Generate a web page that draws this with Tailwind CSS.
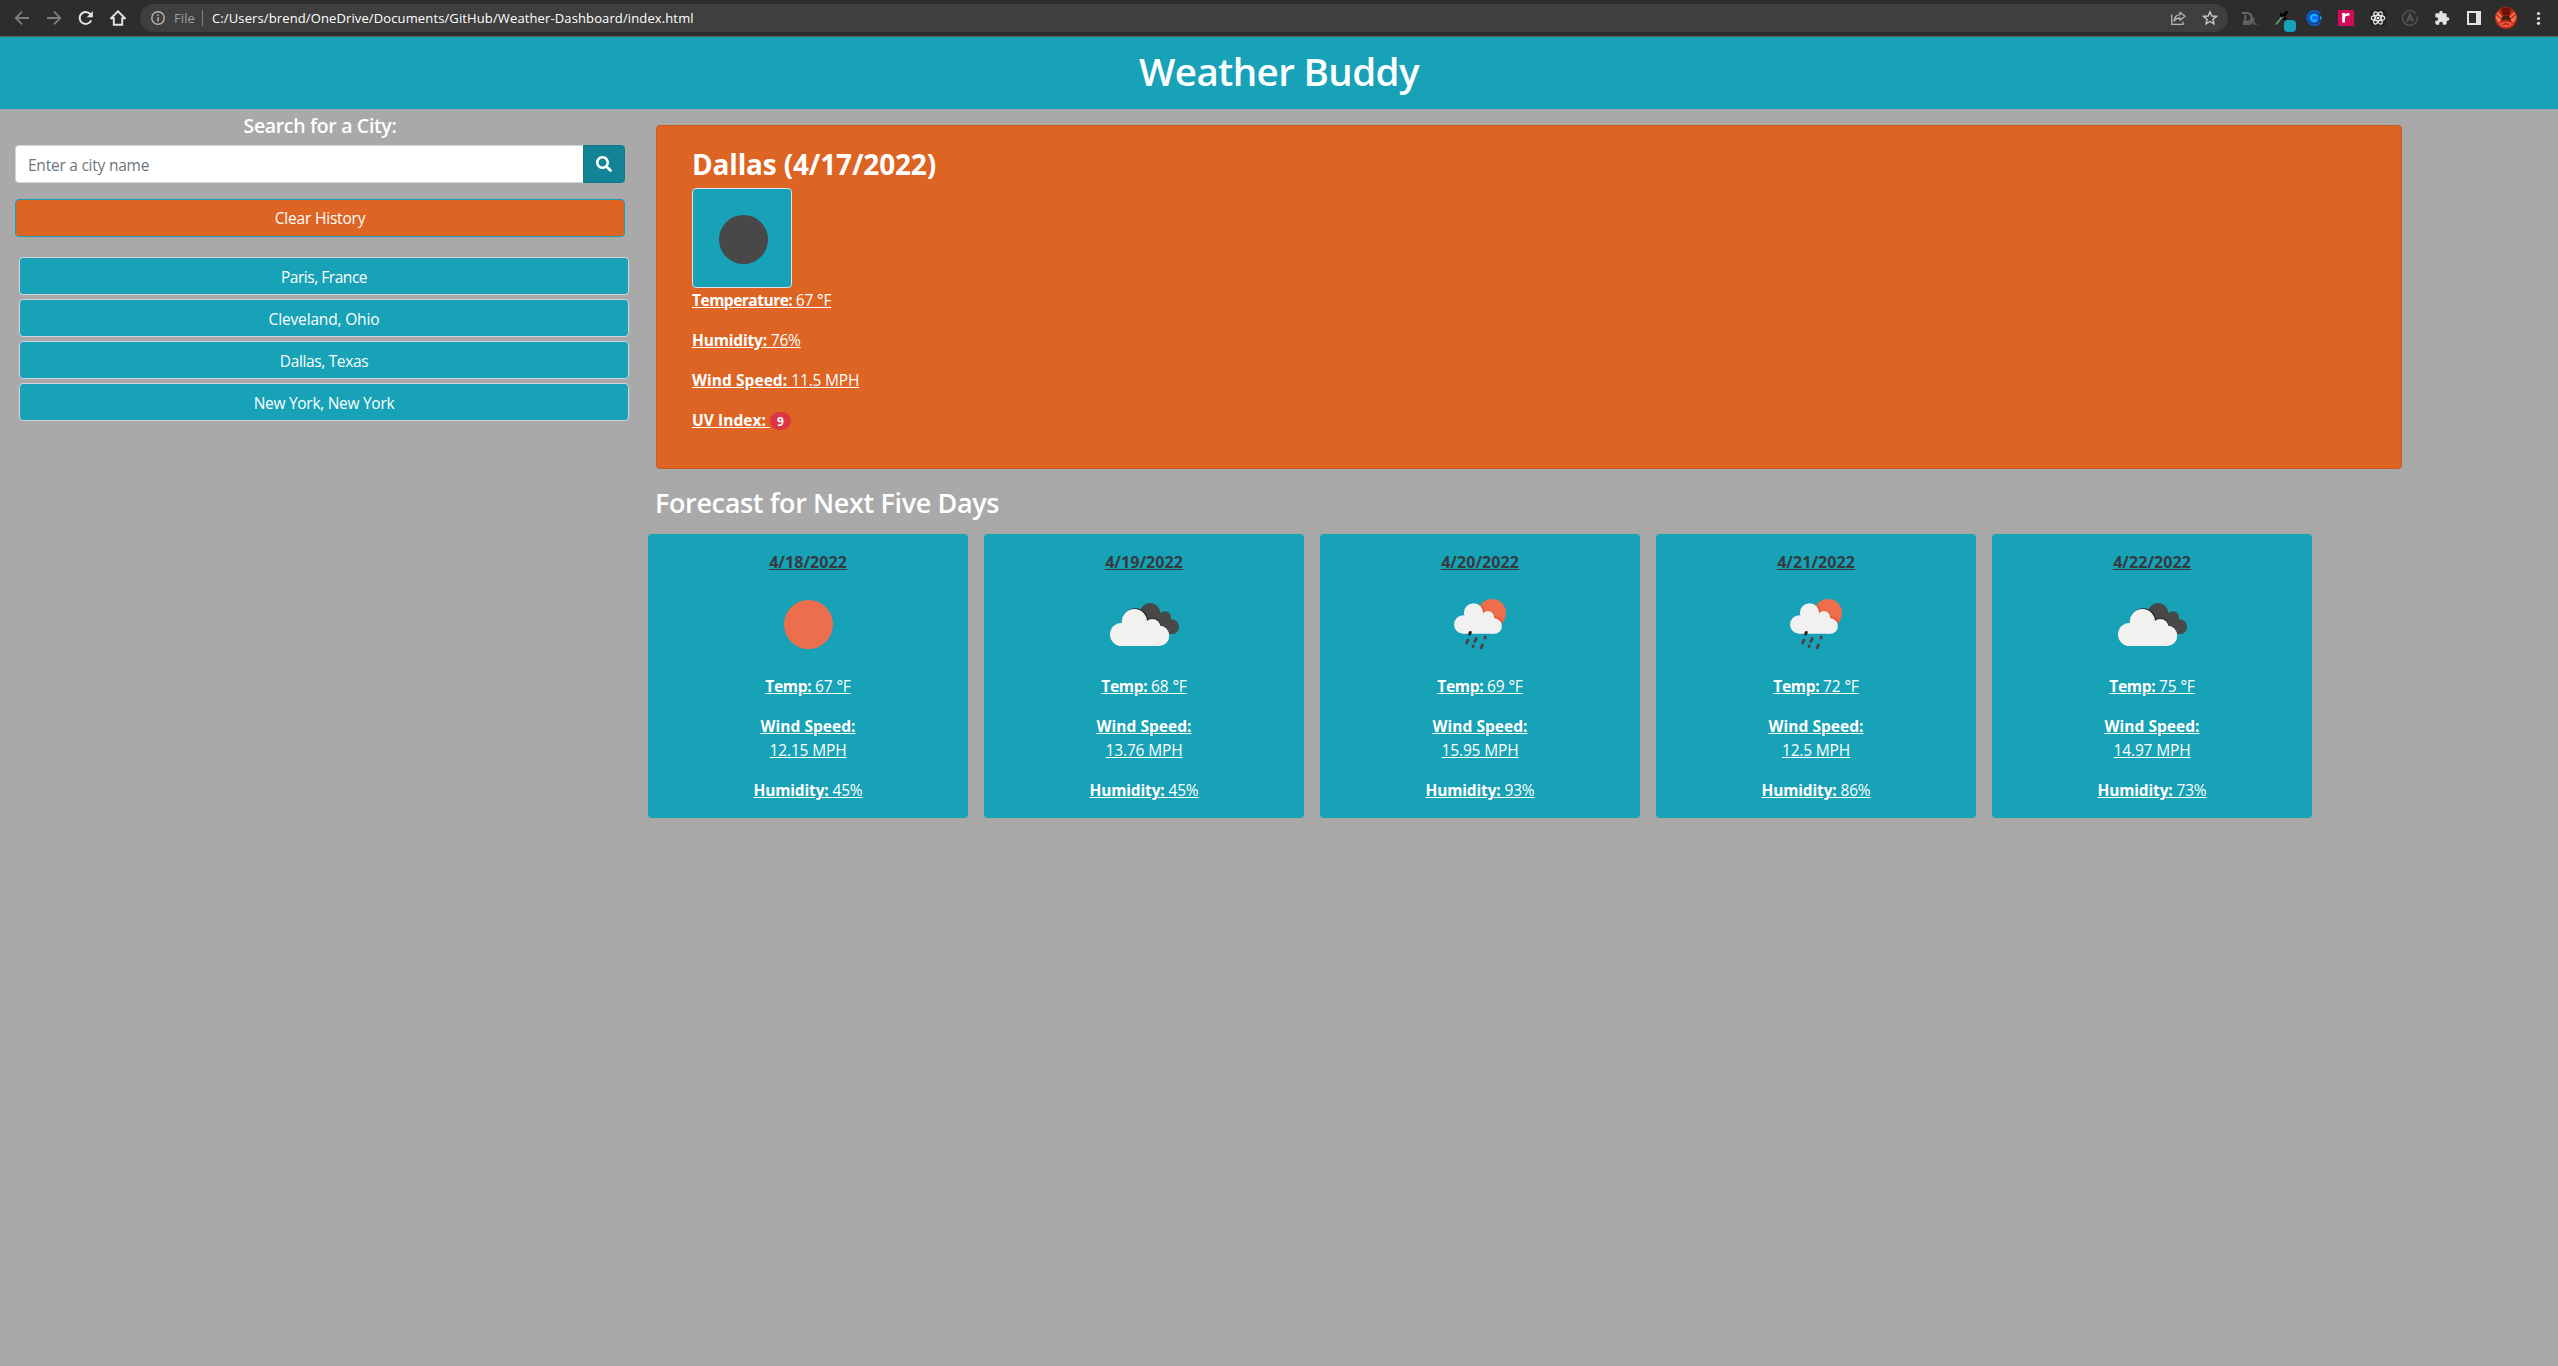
<!DOCTYPE html>
<html lang="en">
<head>
<meta charset="utf-8">
<title>Weather Buddy</title>
<script src="https://cdn.jsdelivr.net/npm/@tailwindcss/browser@4"></script>
</head>
<body class="min-h-screen overflow-hidden bg-[#a9a9a9] font-['Segoe_UI','Open_Sans','Noto_Sans',sans-serif] text-[15.5px] leading-6 text-white">

<svg class="hidden">
  <symbol id="sun" viewBox="0 0 100 100"><circle cx="50.5" cy="50.5" r="24.5" fill="#ec6e4c"/></symbol>
  <symbol id="clouds" viewBox="0 0 100 100">
    <g fill="#484849"><circle cx="56" cy="39.5" r="10.4"/><circle cx="71" cy="43.3" r="6.1"/><circle cx="77.6" cy="52.7" r="7.4"/><path d="M56 40L70 40L78 48L77 60L60 60Z"/></g>
    <g fill="#26262a"><circle cx="41.3" cy="47.2" r="12.9"/><circle cx="58.8" cy="52.2" r="8.2"/><path d="M60 52L66 51.6Q72.500 53.500 75.300 59.500L66 66Z"/></g>
    <g fill="#f2f2f0"><circle cx="27.500" cy="60.500" r="11.5"/><circle cx="40.4" cy="47.7" r="12.6"/><circle cx="58.3" cy="53" r="8.1"/><circle cx="65" cy="61.700" r="10.3"/><path d="M27.500 56L41 46L58 52L65 58V72H27.500Z"/></g>
  </symbol>
  <symbol id="rain" viewBox="0 0 100 100">
    <circle cx="62" cy="39" r="14" fill="#ec6e4c"/>
    <g fill="#e9532b"><path d="M51.500 31Q54.500 34 54.300 37Q62 34.500 65.200 42.500Q71 43.500 73.300 48L66 52L50 46Z"/></g>
    <g fill="#f1f1f2"><circle cx="33.200" cy="50.500" r="9.200"/><circle cx="43.500" cy="38.800" r="9.600"/><circle cx="57.800" cy="43.500" r="6.400"/><circle cx="64.200" cy="52" r="7.700"/><path d="M33 46L44 38L58 44L64 48V59.700H33Z"/></g>
    <g stroke="#484849" stroke-width="3" stroke-linecap="round"><path d="M39.700 60L40.300 58.500" stroke="#1e1e20"/><path d="M36.700 68.800L38 66M44.700 67.400L46.100 64.600M54.800 64L55.200 63M43 72.500L43.200 72M51.100 73.800L52.400 71"/></g>
  </symbol>
</svg>

<!-- Browser toolbar -->
<div class="flex h-[37px] items-start border-b border-[#5c5c5c] bg-[#2d2d2d]">
  <div class="flex h-9 w-[140px] shrink-0 items-center pl-1.5">
    <div class="flex w-8 justify-center"><svg class="size-4" viewBox="0 0 16 16" fill="none" stroke="#7d7d7d" stroke-width="1.8"><path d="M15 8H2M8 1.700L1.700 8L8 14.300"/></svg></div>
    <div class="flex w-8 justify-center"><svg class="size-4" viewBox="0 0 16 16" fill="none" stroke="#7d7d7d" stroke-width="1.8"><path d="M1 8H14M8 1.700L14.300 8L8 14.300"/></svg></div>
    <div class="flex w-8 justify-center"><svg class="size-4" viewBox="0 0 16 16"><path d="M13.200 10.300A6 6 0 1 1 12.300 4.100" fill="none" stroke="#e4e4e4" stroke-width="2"/><path d="M14.900 1V7.200H8.700Z" fill="#e4e4e4"/></svg></div>
    <div class="flex w-8 justify-center"><svg class="size-4" viewBox="0 0 16 16" fill="none" stroke="#e4e4e4" stroke-width="1.9"><path d="M1 8.300H3.800V14.700H12.200V8.300H15L8 1.300Z"/></svg></div>
  </div>
  <div class="mt-1 flex h-7 flex-1 items-center rounded-full bg-[#3f3f3f] pr-2.5 pl-[11px] text-[13px] leading-4">
    <svg class="size-3.5" viewBox="0 0 14 14"><circle cx="7" cy="7" r="6.200" fill="none" stroke="#b4b4b4" stroke-width="1.400"/><path d="M6.200 6.200H7.800V10.500H6.200ZM6.200 3.500H7.800V5H6.200Z" fill="#b4b4b4"/></svg>
    <span class="ml-[9px] tracking-[0.1px] text-[#a0a0a0]">File</span>
    <span class="ml-[7px] h-4 w-px bg-[#858585]"></span>
    <span class="ml-[9px] tracking-[0.122px] text-white">C:/Users/brend/OneDrive/Documents/GitHub/Weather-Dashboard/index.html</span>
    <svg class="mr-4 ml-auto size-4" viewBox="0 0 16 16" fill="none" stroke="#b4b4b4" stroke-width="1.300"><path d="M1.700 4.500V14.300H13V11.800"/><path d="M10 2.200L15 6.300L10 10.300V8C7.500 8 5.500 9 4 11C4.300 7.500 6.500 5 10 4.600Z" stroke-linejoin="round"/></svg>
    <svg class="size-4" viewBox="0 0 16 16" fill="none" stroke="#c8c8c8" stroke-width="1.400"><path d="M8 1.800L9.800 6L14.400 6.400L10.900 9.400L12 13.900L8 11.500L4 13.900L5.100 9.400L1.600 6.400L6.200 6Z"/></svg>
  </div>
  <div class="flex h-9 w-[330px] shrink-0 items-center pl-1.5">
    <div class="flex w-8 justify-center"><svg class="size-4" viewBox="0 0 16 16" fill="none"><path d="M0 3H4.500Q9.500 3.200 9.500 7.800Q9.500 12 5 12H1M3.300 5V12" stroke="#686868" stroke-width="2"/><path d="M1 14H8Q10.500 13 11.500 7.500V12Q11.700 14.300 13.800 14M15 14.300H16" stroke="#606060" stroke-width="1.800"/></svg></div>
    <div class="relative flex w-8 justify-center"><svg class="size-4" viewBox="0 0 16 16"><path d="M2 14.500L8 7" stroke="#6aa06e" stroke-width="1.800"/><path d="M7 4.500L11 8.500M9 6.500L12.500 2.500" stroke="#000" stroke-width="2.800" stroke-linecap="round"/><path d="M8.500 8L9.700 6.600" stroke="#ccc"/></svg><span class="absolute top-[10px] left-[18px] size-3 rounded-sm bg-[#17a2b8]"></span></div>
    <div class="flex w-8 justify-center"><svg class="size-4" viewBox="0 0 16 16" fill="none"><path d="M14.500 4.200A7.200 7.200 0 1 0 14.500 11.800" stroke="#0a63e8" stroke-width="1.500"/><circle cx="8" cy="8" r="5.500" fill="#0869ff"/><path d="M10.600 6.200A3 3 0 1 0 10.600 9.800" stroke="#19cdf2" stroke-width="1.600"/><path d="M14.700 6.200V9.800" stroke="#19a8e8" stroke-width="1.400"/></svg></div>
    <div class="flex w-8 justify-center"><svg class="size-4" viewBox="0 0 16 16"><path fill="#d10a5b" d="M0 0H16V16H0Z"/><path fill="#fff" d="M4.200 3H7V4.500Q7.700 3 9.500 3V5.700Q7 5.700 7 8V12.500H4.200Z"/><circle cx="10.300" cy="4.400" r="1.400" fill="#fff"/></svg></div>
    <div class="flex w-8 justify-center"><svg class="size-4" viewBox="0 0 16 16"><rect width="16" height="16" rx="1.500" fill="#222"/><g fill="none" stroke="#e8e8e8" stroke-width="1.200"><ellipse cx="8" cy="8" rx="6.800" ry="2.600"/><ellipse cx="8" cy="8" rx="6.800" ry="2.600" transform="rotate(60 8 8)"/><ellipse cx="8" cy="8" rx="6.800" ry="2.600" transform="rotate(120 8 8)"/></g><circle cx="8" cy="8" r="1.300" fill="#fff"/></svg></div>
    <div class="flex w-8 justify-center"><svg class="size-4" viewBox="0 0 16 16" fill="none" stroke="#5a5a5a"><path stroke-width="1.200" d="M13.900 3.400A7.400 7.400 0 1 0 15.300 6.500"/><path stroke-width="1.700" d="M4.900 11.700L8 4.300L11.100 11.700M6 9.500H10"/></svg></div>
    <div class="flex w-8 justify-center"><svg class="size-4" viewBox="0 0 24 24"><path fill="#e2e2e2" d="M20.500 11H19V7c0-1.100-.9-2-2-2h-4V3.500C13 2.120 11.880 1 10.500 1S8 2.120 8 3.500V5H4c-1.100 0-1.990.9-1.990 2v3.800H3.500c1.490 0 2.700 1.210 2.700 2.700s-1.210 2.700-2.700 2.700H2V20c0 1.100.9 2 2 2h3.800v-1.500c0-1.490 1.210-2.700 2.700-2.700 1.490 0 2.700 1.210 2.700 2.700V22H17c1.100 0 2-.9 2-2v-4h1.500c1.380 0 2.500-1.120 2.500-2.500S21.880 11 20.500 11z"/></svg></div>
    <div class="flex w-8 justify-center"><svg class="size-3.5" viewBox="0 0 14 14"><path fill="#e2e2e2" fill-rule="evenodd" d="M0 0H14V14H0ZM2 2V12H9V2Z"/></svg></div>
    <div class="flex w-8 justify-center"><svg class="size-[22px]" viewBox="0 0 22 22"><circle cx="11" cy="11" r="11" fill="#b82c1a"/><path d="M6 2Q11-1 16 2L14.500 8H7.500Z" fill="#6e120c"/><path d="M.5 8L6.500 12.500L4 16Q1 13.500 .5 8ZM21.500 8L15.500 12.500L18 16Q21 13.500 21.500 8ZM3 5L8 10L6.500 11L1.500 7ZM19 5L14 10L15.500 11L20.500 7Z" fill="#f5754a"/><path d="M8 8.500H14L16 14L11 12.500L6 14Z" fill="#4c1e14"/><path d="M3.500 17Q11 12.500 18.500 17L14 20H8Z" fill="#f0553a"/><path d="M8 17.500Q11 16 14 17.500" stroke="#6e120c" fill="none"/></svg></div>
    <div class="flex w-8 justify-center"><svg class="h-4 w-4" viewBox="0 0 16 16" fill="#e2e2e2"><circle cx="8.500" cy="3.500" r="1.600"/><circle cx="8.500" cy="8.500" r="1.600"/><circle cx="8.500" cy="13.300" r="1.600"/></svg></div>
  </div>
</div>

<header class="flex h-[72px] justify-center bg-[#17a2b8] pt-2.5">
  <h1 class="text-[38.5px] leading-[48px] font-semibold tracking-[-0.6px]">Weather Buddy</h1>
</header>

<main class="flex">
  <aside class="w-[640px] shrink-0 px-[15px] pt-[5px]">
    <h5 class="mb-[7px] text-center text-[19.5px] leading-6 font-semibold tracking-[-0.33px]">Search for a City:</h5>
    <form class="flex h-[38px] w-[610px]">
      <div class="flex-1 rounded-l border border-r-0 border-[#ced4da] bg-white px-3 pt-[7px] tracking-[-0.24px] text-[#6c757d]">Enter a city name</div>
      <button type="button" class="flex w-[42px] items-center justify-center rounded-r border border-[#117a8b] bg-[#138496]">
        <svg class="size-4" viewBox="0 0 512 512" fill="#fff"><path d="M505 442.700L405.300 343c-4.500-4.500-10.600-7-17-7H372c27.600-35.300 44-79.700 44-128C416 93.100 322.900 0 208 0S0 93.100 0 208s93.100 208 208 208c48.300 0 92.700-16.400 128-44v16.300c0 6.400 2.500 12.500 7 17l99.700 99.700c9.400 9.400 24.600 9.400 33.900 0l28.300-28.300c9.400-9.400 9.400-24.600.1-34zM208 336c-70.700 0-128-57.200-128-128 0-70.700 57.200-128 128-128 70.700 0 128 57.200 128 128 0 70.700-57.200 128-128 128z"/></svg>
      </button>
    </form>
    <button class="mt-4 block h-[38px] w-[610px] rounded border border-[#17a2b8] bg-[#dd6423] tracking-[-0.19px]">Clear History</button>
    <div class="mt-5 ml-1 flex w-[610px] flex-col gap-1 text-center tracking-[-0.25px]">
      <div class="h-[38px] rounded border border-[#ced4da] bg-[#17a2b8] pt-[7px] tracking-[-0.46px]">Paris, France</div>
      <div class="h-[38px] rounded border border-[#ced4da] bg-[#17a2b8] pt-[7px] tracking-[-0.16px]">Cleveland, Ohio</div>
      <div class="h-[38px] rounded border border-[#ced4da] bg-[#17a2b8] pt-[7px] tracking-[-0.35px]">Dallas, Texas</div>
      <div class="h-[38px] rounded border border-[#ced4da] bg-[#17a2b8] pt-[7px] tracking-[-0.29px]">New York, New York</div>
    </div>
  </aside>

  <section class="pt-4">
    <div class="ml-4 h-[344px] w-[1746px] rounded border border-[#c75a20] bg-[#dd6423] px-[35px] pt-[21px] tracking-[-0.18px]">
      <h3 class="mb-[7px] text-[28px] leading-[34px] font-bold tracking-[-0.167px]">Dallas (4/17/2022)</h3>
      <svg class="size-[100px] rounded border border-[#dee2e6] bg-[#17a2b8]" viewBox="0 0 98 98"><circle cx="50.500" cy="50.500" r="24.500" fill="#484849"/></svg>
      <p class="mb-4 underline"><b class="tracking-[-0.5px]">Temperature: </b>67 °F</p>
      <p class="mb-4 underline"><b>Humidity: </b>76%</p>
      <p class="mb-4 underline"><b class="tracking-[0.05px]">Wind Speed: </b>11.5 MPH</p>
      <p class="flex"><b class="tracking-[0.05px] whitespace-pre underline">UV Index: </b><span class="mt-1 h-[18px] w-[21px] rounded-full bg-[#dc3545] text-center text-xs leading-[19px] font-bold tracking-normal">9</span></p>
    </div>
    <h3 class="mt-[17px] mb-3.5 ml-[15px] text-[27px] leading-[34px] font-semibold tracking-[-0.37px]">Forecast for Next Five Days</h3>
    <div id="forecast" class="ml-2 flex gap-4"></div>
  </section>
</main>

<script>
const days = [
  ['4/18/2022', 'sun', '67', '12.15', '45'],
  ['4/19/2022', 'clouds', '68', '13.76', '45'],
  ['4/20/2022', 'rain', '69', '15.95', '93'],
  ['4/21/2022', 'rain', '72', '12.5', '86'],
  ['4/22/2022', 'clouds', '75', '14.97', '73'],
];
document.getElementById('forecast').innerHTML = days.map(([date, icon, temp, wind, hum]) => `
  <article class="flex h-[284px] w-80 flex-col items-center rounded bg-[#17a2b8] pt-4 text-center tracking-[-0.16px]">
    <h5 class="text-base/6 font-bold tracking-[0.05px] text-[#343a40] underline">${date}</h5>
    <svg class="size-[100px]"><use href="#${icon}"/></svg>
    <p class="mb-4 underline"><b class="tracking-[-0.3px]">Temp: </b>${temp} °F</p>
    <p class="mb-4 underline"><b class="tracking-[0.05px]">Wind Speed:</b><br>${wind} MPH</p>
    <p class="underline"><b>Humidity: </b>${hum}%</p>
  </article>`).join('');
</script>
</body>
</html>
